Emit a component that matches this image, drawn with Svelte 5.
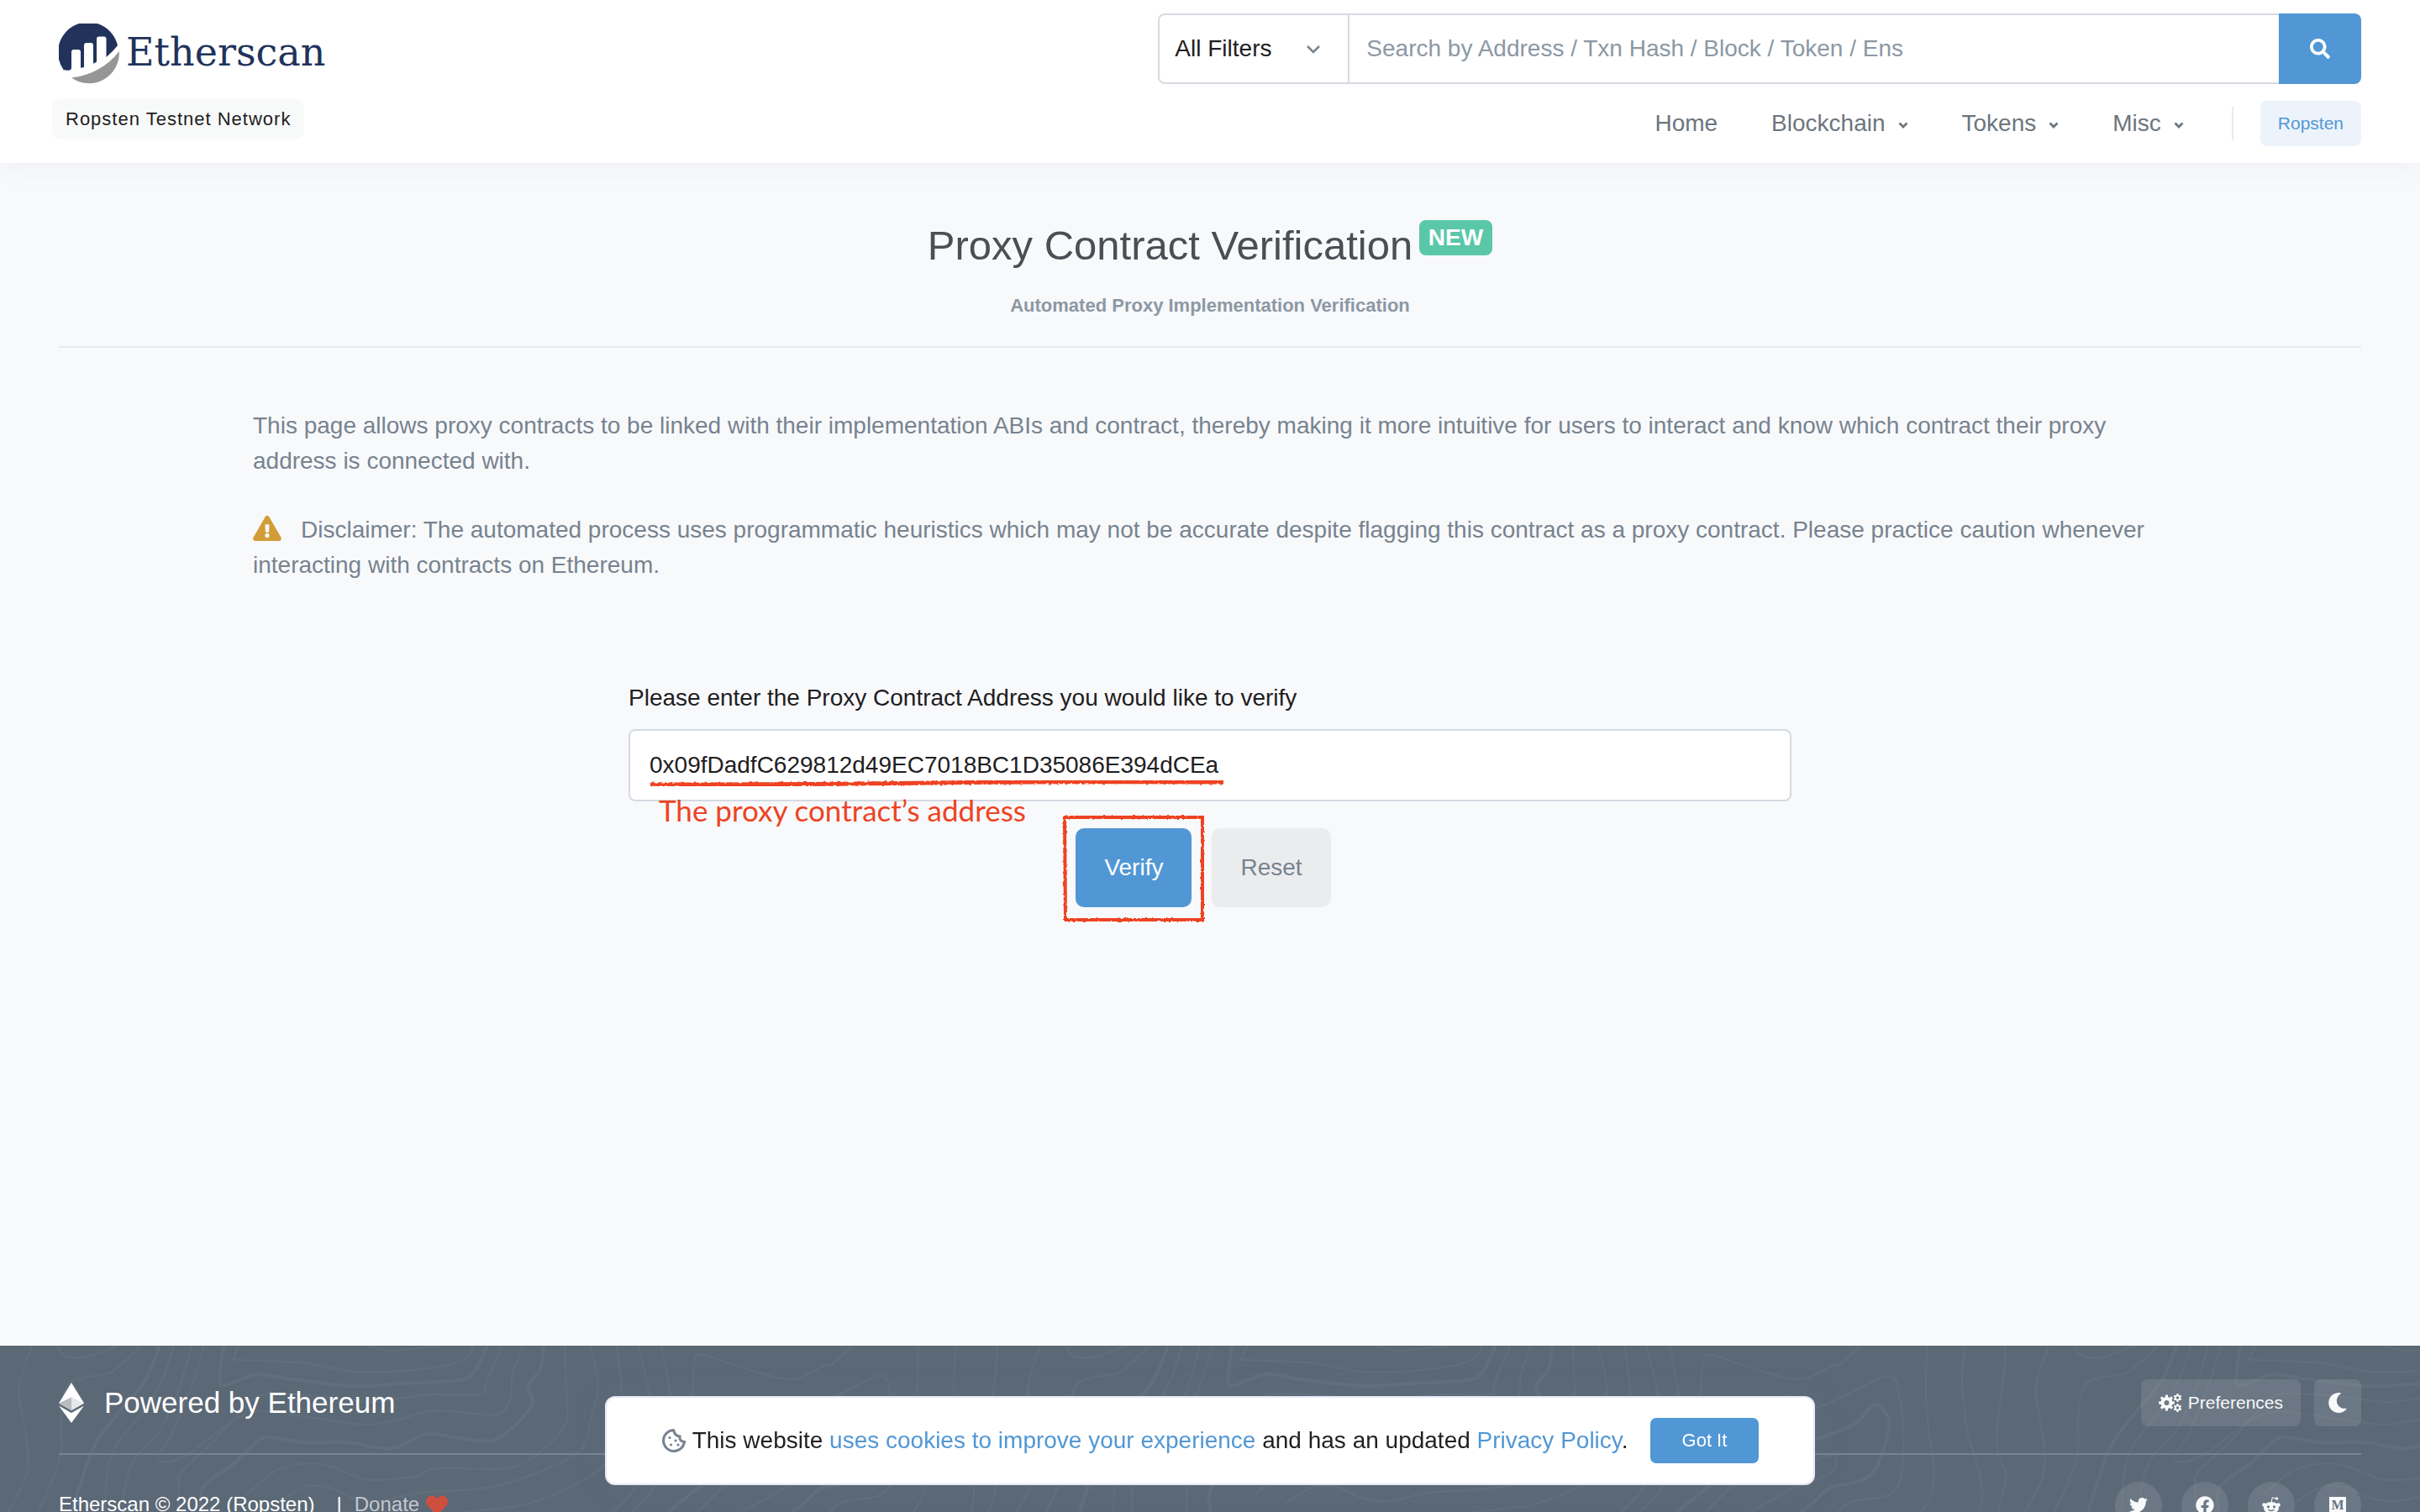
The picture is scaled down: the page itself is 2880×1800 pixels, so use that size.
<script>
  let filter = $state('All Filters');
  let address = $state('0x09fDadfC629812d49EC7018BC1D35086E394dCEa');

  const menus = [
    { label: 'Home', drop: false },
    { label: 'Blockchain', drop: true },
    { label: 'Tokens', drop: true },
    { label: 'Misc', drop: true }
  ];

  // Contour lines of the footer background, one 1200px wide tile
  const thin = [
    [[1093, 0], [1092, 58], [1095, 98], [1102, 151], [1097, 181], [1087, 198]],
    [[1138, 0], [1135, 48], [1142, 105], [1150, 131], [1159, 171], [1156, 198]],
    [[1186, 0], [1185, 31], [1176, 115], [1187, 155], [1177, 198]],
    [[38, 0], [23, 48], [27, 85], [33, 125], [30, 158], [10, 198]],
    [[68, 0], [77, 12], [100, 14], [140, 0]],
    [[168, 0], [133, 31], [100, 38], [80, 48], [73, 85], [73, 125], [63, 158], [45, 198]],
    [[207, 0], [193, 41], [173, 75], [137, 121], [127, 161], [125, 198]],
    [[228, 0], [213, 51], [190, 101], [160, 135], [148, 171], [147, 198]],
    [[243, 0], [228, 48], [203, 108], [188, 131], [192, 138], [207, 137], [230, 125], [280, 88], [313, 78], [353, 83], [433, 94], [460, 91], [480, 87], [503, 79], [537, 78], [590, 82], [607, 65], [610, 35], [622, 0]],
    [[284, 0], [279, 13], [283, 17], [357, 20], [423, 31], [480, 30], [533, 23], [557, 13], [563, 0]],
    [[435, 0], [463, 6], [480, 5], [520, 0]],
    [[212, 198], [213, 165], [215, 151], [253, 115], [297, 68], [320, 57], [380, 60], [440, 67], [480, 62], [513, 58], [573, 58], [578, 45], [593, 11], [597, 0]],
    [[293, 178], [330, 148], [370, 140], [400, 146], [433, 159], [467, 159], [497, 155], [520, 146], [600, 146], [637, 131], [672, 95], [674, 58], [672, 0]],
    [[330, 188], [363, 168], [393, 169], [420, 181], [453, 185], [500, 175], [563, 171], [613, 161], [687, 128], [702, 91], [712, 48], [702, 0]],
    [[553, 198], [620, 190], [673, 171], [720, 141], [735, 98], [740, 58], [734, 0]],
    [[730, 198], [757, 166], [775, 100], [773, 60], [760, 0]],
    [[753, 198], [780, 166], [798, 110], [798, 60], [787, 0]],
    [[830, 198], [862, 166]],
    [[883, 198], [940, 166]],
    [[824, 100], [824, 60], [827, 18], [837, 11], [877, 24], [940, 40], [980, 24], [990, 22], [1015, 0]],
    [[930, 84], [960, 75], [993, 61], [1047, 36], [1060, 58], [1065, 111], [1062, 158], [1047, 178], [1003, 186], [988, 198]],
    [[940, 140], [960, 135], [983, 131], [983, 148], [960, 161]]
  ];
  const thick = [
    [[190, 0], [173, 41], [140, 81], [113, 118], [97, 161], [85, 198]],
    [[266, 0], [262, 31], [262, 46], [273, 46], [307, 34], [347, 40], [420, 48], [480, 45], [547, 41], [565, 30], [580, 0]],
    [[240, 198], [242, 168], [277, 141], [310, 111], [330, 110], [363, 115], [413, 115], [453, 122], [473, 121], [493, 111], [513, 105], [567, 113], [597, 108], [633, 71], [628, 48], [643, 28], [647, 0]],
    [[795, 198], [835, 166]],
    [[940, 116], [960, 112], [1007, 93], [1032, 70], [1048, 95], [1033, 145], [1013, 161], [977, 170], [957, 188], [943, 198]]
  ];

  function smooth(p) {
    let d = `M${p[0][0]} ${p[0][1]}`;
    for (let i = 0; i < p.length - 1; i++) {
      const a = p[i - 1] ?? p[i];
      const b = p[i];
      const c = p[i + 1];
      const e = p[i + 2] ?? c;
      d += `C${b[0] + (c[0] - a[0]) / 6} ${b[1] + (c[1] - a[1]) / 6} ${c[0] - (e[0] - b[0]) / 6} ${c[1] - (e[1] - b[1]) / 6} ${c[0]} ${c[1]}`;
    }
    return d;
  }

  // Toothed ring with a round hole
  function gear(cx, cy, outer, inner, hole, teeth) {
    let d = '';
    const step = (Math.PI * 2) / teeth;
    for (let i = 0; i < teeth; i++) {
      const m = i * step - Math.PI / 2;
      const pts = [[inner, -0.3], [outer, -0.2], [outer, 0.2], [inner, 0.3]];
      for (const [r, o] of pts) {
        d += `${d ? 'L' : 'M'}${cx + r * Math.cos(m + o * step)} ${cy + r * Math.sin(m + o * step)}`;
      }
    }
    return `${d}ZM${cx - hole} ${cy}a${hole} ${hole} 0 1 0 ${hole * 2} 0a${hole} ${hole} 0 1 0 ${-hole * 2} 0Z`;
  }
</script>

<div class="page">
  <header>
    <div class="brand">
      <a class="logo" href="/" aria-label="Etherscan">
        <svg class="mark" viewBox="0 0 72 72" aria-hidden="true">
          <path fill="#21325b" d="M5.5 55A36 36 0 1 1 70 26C66 31 61 36 56.5 40V18.5q0-3-3-3H48q-3 0-3 3V45.500q-2 1.600-4 2.300V26q0-3-3-3H33q-3 0-3 3V52q-2 .7-4 .8V34q0-3-3-3H18q-3 0-3 3V53q0 2-2 2.400Q9 56 5.500 55Z" />
          <path fill="#979695" d="M15 64.500C38 62 58 51 71.800 33A36 36 0 0 1 15 64.500Z" />
        </svg>
        <span class="word">Etherscan</span>
      </a>
      <span class="network">Ropsten Testnet Network</span>
    </div>
    <div class="tools">
      <form class="search">
        <div class="filter">
          <select aria-label="Filter" bind:value={filter}>
            <option>All Filters</option>
            <option>Addresses</option>
            <option>Tokens</option>
          </select>
          <svg viewBox="0 0 18 12" aria-hidden="true"><path d="M2 2l7 7 7-7" /></svg>
        </div>
        <input type="text" aria-label="Search" placeholder="Search by Address / Txn Hash / Block / Token / Ens" />
        <button type="button" aria-label="Search">
          <svg viewBox="0 0 512 512" aria-hidden="true"><path d="M505 442.700L405.300 343c-4.500-4.500-10.600-7-17-7H372c27.600-35.300 44-79.700 44-128C416 93.100 322.900 0 208 0S0 93.100 0 208s93.100 208 208 208c48.300 0 92.700-16.400 128-44v16.300c0 6.400 2.500 12.500 7 17l99.700 99.700c9.400 9.400 24.600 9.400 33.900 0l28.300-28.300c9.400-9.400 9.400-24.600.1-34zM208 336c-70.700 0-128-57.200-128-128 0-70.700 57.200-128 128-128 70.700 0 128 57.200 128 128 0 70.700-57.200 128-128 128z" /></svg>
        </button>
      </form>
      <nav>
        {#each menus as m}
          <a href="/">{m.label}{#if m.drop}<svg viewBox="0 0 12 10" aria-hidden="true"><path d="M1.500 2.500L6 7l4.500-4.500" /></svg>{/if}</a>
        {/each}
        <span class="bar"></span>
        <a class="chain" href="/">Ropsten</a>
      </nav>
    </div>
  </header>

  <main>
    <div class="title">
      <h1>Proxy Contract Verification <span class="new">NEW</span></h1>
      <p>Automated Proxy Implementation Verification</p>
    </div>
    <section class="intro">
      <p>This page allows proxy contracts to be linked with their implementation ABIs and contract, thereby making it more intuitive for users to interact and know which contract their proxy address is connected with.</p>
      <p><svg class="warn" viewBox="0 0 576 512" aria-hidden="true"><path d="M569.517 440.013C587.975 472.007 564.806 512 527.940 512H48.054c-36.937 0-59.999-40.055-41.577-71.987L246.423 23.985c18.467-32.009 64.720-31.951 83.154 0l239.940 416.028zM288 354c-25.405 0-46 20.595-46 46s20.595 46 46 46 46-20.595 46-46-20.595-46-46-46zm-43.673-165.346l7.418 136c.347 6.364 5.609 11.346 11.982 11.346h48.546c6.373 0 11.635-4.982 11.982-11.346l7.418-136c.375-6.874-5.098-12.654-11.982-12.654h-63.383c-6.884 0-12.356 5.780-11.981 12.654z" /></svg>Disclaimer: The automated process uses programmatic heuristics which may not be accurate despite flagging this contract as a proxy contract. Please practice caution whenever interacting with contracts on Ethereum.</p>
    </section>
    <form class="verify">
      <label for="addr">Please enter the Proxy Contract Address you would like to verify</label>
      <div class="field">
        <input id="addr" type="text" bind:value={address} />
        <svg class="underline" viewBox="0 0 686 12" aria-hidden="true">
          <filter id="rough" x="-5%" y="-50%" width="110%" height="200%"><feTurbulence type="fractalNoise" baseFrequency="0.25" numOctaves="2" /><feDisplacementMap in="SourceGraphic" scale="4" /></filter>
          <path filter="url(#rough)" d="M2 8Q200 8 340 6T684 5" />
        </svg>
        <span class="note">The proxy contract’s address</span>
      </div>
      <div class="actions">
        <span class="marked">
          <button type="button" class="primary">Verify</button>
          <svg class="frame" viewBox="0 0 170 130" aria-hidden="true">
            <filter id="rough2" x="-5%" y="-5%" width="110%" height="110%"><feTurbulence type="fractalNoise" baseFrequency="0.3" numOctaves="2" /><feDisplacementMap in="SourceGraphic" scale="3" /></filter>
            <path filter="url(#rough2)" d="M3 4H167V126H4Z" />
          </svg>
        </span>
        <button type="reset" class="plain">Reset</button>
      </div>
    </form>
  </main>

  <footer>
    <svg class="contours" aria-hidden="true">
      <pattern id="topo" width="1200" height="400" patternUnits="userSpaceOnUse">
        {#each thin as p}<path d={smooth(p)} stroke-width="2" />{/each}
        {#each thick as p}<path d={smooth(p)} stroke-width="4" />{/each}
      </pattern>
      <rect width="100%" height="100%" fill="url(#topo)" />
    </svg>
    <div class="top">
      <div class="powered">
        <svg viewBox="0 0 30 48" aria-hidden="true">
          <path fill="#fff" d="M15 0L30 24.500 15 33 0 24.500Z" />
          <path fill="#b9bbbe" d="M15 17.500V33L0 24.500Z" />
          <path fill="#e6e7e9" d="M15 17.500V33L30 24.500Z" />
          <path fill="#fff" d="M0 27.500L15 36l15-8.500L15 48Z" />
        </svg>
        <span>Powered by Ethereum</span>
      </div>
      <div class="prefs">
        <button type="button">
          <svg class="cogs" viewBox="0 0 28 22" aria-hidden="true">
            <path fill-rule="evenodd" d={gear(9.5, 11, 9.5, 7, 3, 8)} />
            <path fill-rule="evenodd" d={gear(22.5, 5, 5, 3.700, 1.700, 6)} />
            <path fill-rule="evenodd" d={gear(22.5, 17, 5, 3.700, 1.700, 6)} />
          </svg>
          Preferences
        </button>
        <button type="button" class="night" aria-label="Dark mode">
          <svg viewBox="0 0 512 512" aria-hidden="true"><path d="M283.211 512c78.962 0 151.079-35.925 198.857-94.792 7.068-8.708-.639-21.430-11.562-19.350-124.203 23.654-238.262-71.576-238.262-196.954 0-72.222 38.662-138.635 101.498-174.394 9.686-5.512 7.250-20.197-3.756-22.230A258.156 258.156 0 0 0 283.211 0c-141.309 0-256 114.511-256 256 0 141.309 114.511 256 256 256z" /></svg>
        </button>
      </div>
    </div>
    <div class="bottom">
      <p>Etherscan © 2022 (Ropsten)<span class="pipe">|</span><a href="/">Donate</a><svg viewBox="0 0 512 512" aria-hidden="true"><path d="M462.300 62.600C407.500 15.900 326 24.300 275.700 76.200L256 96.500l-19.700-20.300C186.100 24.300 104.500 15.900 49.700 62.600c-62.800 53.600-66.100 149.800-9.900 207.900l193.500 199.800c12.500 12.900 32.800 12.900 45.300 0l193.500-199.800c56.300-58.100 53-154.300-9.800-207.900z" /></svg></p>
      <div class="social">
        <a href="/" aria-label="Twitter"><svg viewBox="0 0 512 512"><path d="M459.370 151.716c.325 4.548.325 9.097.325 13.645 0 138.720-105.583 298.558-298.558 298.558-59.452 0-114.680-17.219-161.137-47.106 8.447.974 16.568 1.299 25.340 1.299 49.055 0 94.213-16.568 130.274-44.832-46.132-.975-84.792-31.188-98.112-72.772 6.498.974 12.995 1.624 19.818 1.624 9.421 0 18.843-1.300 27.614-3.573-48.081-9.747-84.143-51.980-84.143-102.985v-1.299c13.969 7.797 30.214 12.670 47.431 13.319-28.264-18.843-46.781-51.005-46.781-87.391 0-19.492 5.197-37.360 14.294-52.954 51.655 63.675 129.300 105.258 216.365 109.807-1.624-7.797-2.599-15.918-2.599-24.040 0-57.828 46.782-104.934 104.934-104.934 30.213 0 57.502 12.670 76.670 33.137 23.715-4.548 46.456-13.320 66.599-25.340-7.798 24.366-24.366 44.833-46.132 57.827 21.117-2.273 41.584-8.122 60.426-16.243-14.292 20.791-32.161 39.308-52.628 54.253z" /></svg></a>
        <a href="/" aria-label="Facebook"><svg viewBox="0 0 512 512"><path d="M504 256C504 119 393 8 256 8S8 119 8 256c0 123.780 90.690 226.380 209.250 245V327.690h-63V256h63v-54.640c0-62.150 37-96.480 93.670-96.480 27.140 0 55.520 4.840 55.520 4.840v61h-31.280c-30.800 0-40.410 19.120-40.410 38.730V256h68.780l-11 71.690h-57.780V501C413.310 482.380 504 379.780 504 256z" /></svg></a>
        <a href="/" aria-label="Reddit">
          <svg viewBox="0 0 22 22">
            <path fill-rule="evenodd" d="M11 7c5 0 9 2.800 9 7s-4 7-9 7-9-2.800-9-7 4-7 9-7ZM7.500 11.200a1.600 1.600 0 1 0 0 3.200 1.600 1.600 0 0 0 0-3.200Zm7 0a1.600 1.600 0 1 0 0 3.200 1.600 1.600 0 0 0 0-3.200ZM7 16.500c2 2.200 6 2.200 8 0l-.8-.7c-1.600 1.400-4.800 1.400-6.400 0Z" />
            <circle cx="2.500" cy="10.500" r="2.300" /><circle cx="19.500" cy="10.500" r="2.300" /><circle cx="17.500" cy="3" r="1.800" />
            <path d="M11 7.500L12.300 1.800 17 3" fill="none" stroke="#f8f9fa" stroke-width="1.100" />
          </svg>
        </a>
        <a href="/" aria-label="Medium"><span class="medium">M</span></a>
      </div>
    </div>
  </footer>

  <aside class="cookies">
    <svg viewBox="0 0 30 30" aria-hidden="true">
      <path d="M14.500 2.500C7.500 3 2.500 8.500 2.500 15s5.500 12.500 12.500 12.500c6.500 0 11.500-4.500 12.500-11-3.500-.5-5.500-2-5.500-4.500V10c-3.500 0-6-2-7.500-7.500Z" />
      <g class="chips"><circle cx="10" cy="11.500" r="1.600" /><circle cx="17" cy="15" r="1.600" /><circle cx="11.500" cy="20" r="1.600" /><circle cx="20" cy="20" r="1.600" /></g>
    </svg>
    <p>This website <a href="/">uses cookies to improve your experience</a> and has an updated <a href="/">Privacy Policy</a>.</p>
    <button type="button">Got It</button>
  </aside>
</div>

<style>
  :global(body) {
    overflow: hidden;
    background: #f8f9fb;
  }
  .page {
    height: 100vh;
    overflow: hidden;
    display: flex;
    flex-direction: column;
    font: 28px/42px 'Liberation Sans', Arial, sans-serif;
    color: #1e2022;
  }
  .page * {
    box-sizing: border-box;
  }
  p, h1 {
    margin: 0;
  }
  a {
    text-decoration: none;
  }
  button, input, select {
    font: inherit;
    border: 0;
    margin: 0;
  }
  header {
    flex: none;
    display: flex;
    justify-content: space-between;
    height: 194px;
    padding: 16px 70px 20px;
    background: #fff;
    box-shadow: 0 8px 24px rgba(140, 152, 164, 0.07);
  }
  .brand {
    display: flex;
    flex-direction: column;
    align-items: flex-start;
    padding-top: 12px;
  }
  .logo {
    display: flex;
    align-items: center;
    gap: 8px;
    color: #21325b;
  }
  .mark {
    width: 72px;
    height: 72px;
  }
  .word {
    font: 46px/64px 'DejaVu Serif', serif;
    padding-bottom: 4px;
  }
  .network {
    margin: 18px 0 0 -8px;
    padding: 0 16px;
    border-radius: 10px;
    background: #f8faf9;
    font-size: 22px;
    line-height: 48px;
    letter-spacing: 1px;
  }
  .tools {
    width: 52.25%;
    display: flex;
    flex-direction: column;
    gap: 20px;
  }
  .search {
    display: flex;
    height: 84px;
  }
  .filter {
    position: relative;
    display: flex;
    width: 226px;
  }
  .filter select {
    flex: 1;
    appearance: none;
    padding: 0 18px;
    background: #fff;
    color: #1e2022;
    border: 2px solid #d5dae2;
    border-right: 0;
    border-radius: 8px 0 0 8px;
  }
  .filter svg {
    position: absolute;
    right: 32px;
    top: 37px;
    width: 18px;
    height: 12px;
    fill: none;
    stroke: #77838f;
    stroke-width: 2.500;
  }
  .search input {
    flex: 1;
    min-width: 0;
    padding: 0 20px;
    border: 2px solid #d5dae2;
    border-right: 0;
    background: #fff;
  }
  .search input::placeholder {
    color: #8c98a4;
    opacity: 1;
  }
  .search button {
    width: 98px;
    padding: 0;
    border-radius: 0 8px 8px 0;
    background: #5197d5;
  }
  .search button svg {
    display: block;
    width: 24px;
    height: 24px;
    margin: 0 auto;
    fill: #fff;
  }
  nav {
    display: flex;
    justify-content: flex-end;
    align-items: center;
    height: 54px;
  }
  nav a {
    color: #6c757e;
    margin-right: 64px;
  }
  nav a svg {
    width: 12px;
    height: 10px;
    margin-left: 15px;
    vertical-align: 2px;
    fill: none;
    stroke: #6c757e;
    stroke-width: 2.800;
  }
  nav a:nth-last-of-type(2) {
    margin-right: 57px;
  }
  nav .bar {
    width: 2px;
    height: 40px;
    margin-right: 32px;
    background: #e7eaf3;
  }
  nav .chain {
    margin: 0;
    padding: 0 21px;
    border-radius: 8px;
    background: #ecf3fb;
    color: #5197d5;
    font-size: 21px;
    line-height: 54px;
  }
  main {
    flex: none;
    height: calc(100vh - 392px);
    padding: 0 70px;
  }
  .title {
    padding: 62px 0 30px;
    border-bottom: 2px solid #e7eaf3;
    text-align: center;
  }
  h1 {
    font-size: 49px;
    line-height: 72px;
    font-weight: 400;
    color: #4a4f55;
  }
  .new {
    display: inline-block;
    vertical-align: 17px;
    margin-left: -6px;
    padding: 0 11px;
    border-radius: 8px;
    background: #5bc7a9;
    color: #fff;
    font-size: 28px;
    line-height: 42px;
    font-weight: 700;
  }
  .title p {
    margin-top: 18px;
    font-size: 22px;
    line-height: 36px;
    font-weight: 700;
    color: #8c98a4;
  }
  .intro {
    padding: 72px 231px 0;
    color: #77838f;
  }
  .intro p + p {
    margin-top: 40px;
  }
  .warn {
    width: 34px;
    height: 30px;
    margin-right: 23px;
    vertical-align: -4px;
    fill: #d29d36;
  }
  .verify {
    display: flex;
    flex-direction: column;
    max-width: 1384px;
    margin: 116px auto 0;
  }
  .verify label {
    margin-bottom: 16px;
  }
  .field {
    position: relative;
  }
  .field input {
    display: block;
    width: 100%;
    height: 86px;
    padding: 0 23px;
    border: 2px solid #d5dae2;
    border-radius: 8px;
    background: #fff;
    color: #1e2022;
  }
  .underline {
    position: absolute;
    left: 24px;
    top: 58px;
    width: 686px;
    height: 12px;
    overflow: visible;
  }
  .underline path, .frame path {
    fill: none;
    stroke: #ee4323;
    stroke-width: 5;
  }
  .note {
    position: absolute;
    left: 36px;
    top: 74px;
    font: 35px/44px Lato, sans-serif;
    color: #ee4323;
    white-space: nowrap;
  }
  .actions {
    display: flex;
    justify-content: center;
    gap: 24px;
    margin-top: 32px;
    padding-right: 16px;
  }
  .marked {
    position: relative;
  }
  .frame {
    position: absolute;
    left: -16px;
    top: -17px;
    width: 170px;
    height: 130px;
    pointer-events: none;
  }
  .frame path {
    stroke-width: 4;
  }
  .actions button {
    height: 94px;
    padding: 0 34px;
    border-radius: 10px;
  }
  .primary {
    background: #5197d5;
    color: #fff;
  }
  .plain {
    background: #ebecee;
    color: #77838f;
  }
  footer {
    position: relative;
    flex: none;
    padding: 40px 70px;
    background: #5b6876;
    color: #fff;
  }
  .contours {
    position: absolute;
    inset: 0;
    width: 100%;
    height: 100%;
    fill: none;
    stroke: #616e7c;
  }
  .contours rect {
    stroke: none;
  }
  .top, .bottom {
    position: relative;
    display: flex;
    justify-content: space-between;
  }
  .top {
    padding-bottom: 32px;
    border-bottom: 2px solid #7a8294;
  }
  .powered {
    display: flex;
    align-items: center;
    gap: 24px;
    font-size: 35px;
  }
  .powered svg {
    width: 30px;
    height: 48px;
  }
  .prefs {
    display: flex;
    gap: 16px;
  }
  .prefs button {
    display: flex;
    align-items: center;
    gap: 7px;
    height: 56px;
    padding: 0 21px;
    border-radius: 8px;
    background: rgba(255, 255, 255, 0.1);
    color: #f8f9fa;
    font-size: 21px;
  }
  .prefs svg {
    fill: #f8f9fa;
  }
  .cogs {
    width: 28px;
    height: 22px;
  }
  .prefs .night {
    width: 56px;
    padding: 0 16px;
  }
  .night svg {
    width: 24px;
    height: 24px;
  }
  .bottom {
    padding-top: 32px;
  }
  .bottom p {
    padding-top: 6px;
    font-size: 24px;
    white-space: nowrap;
  }
  .pipe {
    margin: 0 15px 0 26px;
  }
  .bottom p a {
    color: #c3c8ce;
  }
  .bottom p svg {
    width: 26px;
    height: 26px;
    margin-left: 8px;
    vertical-align: -6px;
    fill: #cf4f3f;
  }
  .social {
    display: flex;
    gap: 23px;
  }
  .social a {
    display: flex;
    align-items: center;
    justify-content: center;
    width: 56px;
    height: 56px;
    border-radius: 50%;
    background: rgba(255, 255, 255, 0.1);
  }
  .social svg {
    width: 22px;
    height: 22px;
    fill: #f8f9fa;
  }
  .medium {
    width: 20px;
    height: 20px;
    background: #f8f9fa;
    color: #65717e;
    font: 700 16px/20px 'Liberation Serif', serif;
    text-align: center;
  }
  .cookies {
    position: fixed;
    left: 25%;
    bottom: 32px;
    width: 50%;
    height: 106px;
    display: flex;
    align-items: center;
    justify-content: center;
    border: 2px solid #e7eaf3;
    border-radius: 12px;
    background: #fff;
    box-shadow: 0 0 40px rgba(140, 152, 164, 0.1);
  }
  .cookies svg {
    width: 30px;
    height: 30px;
    margin-right: 7px;
    fill: none;
    stroke: #77838f;
    stroke-width: 3;
  }
  .cookies .chips {
    fill: #77838f;
    stroke: none;
  }
  .cookies a {
    color: #5197d5;
  }
  .cookies button {
    height: 54px;
    margin-left: 26px;
    padding: 0 38px;
    border-radius: 7px;
    background: #5197d5;
    color: #fff;
    font-size: 22px;
  }
</style>
